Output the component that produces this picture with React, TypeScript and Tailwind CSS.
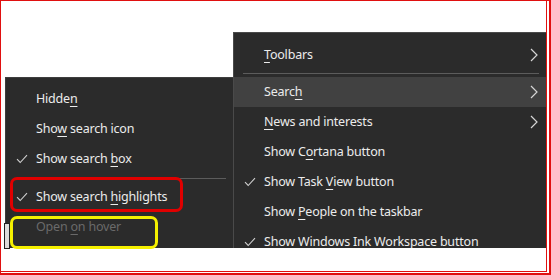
import React from 'react';

type Item = {
  label: React.ReactNode;
  checked?: boolean;
  submenu?: boolean;
  active?: boolean;
  disabled?: boolean;
};

const font = { fontFamily: '"Noto Sans", "Open Sans", sans-serif' };

const Check: React.FC = () => (
  <svg width="12" height="10" viewBox="0 0 12 10" fill="none" className="text-[#d0d0d0]">
    <path d="M1 5.2 L4.2 8.5 L11 1.2" stroke="currentColor" strokeWidth="1.1" />
  </svg>
);

const Chevron: React.FC = () => (
  <svg width="8" height="14" viewBox="0 0 8 14" fill="none" className="text-[#d6d6d6]">
    <path d="M1 1 L7 7 L1 13" stroke="currentColor" strokeWidth="1.2" />
  </svg>
);

const Key: React.FC<{ children: React.ReactNode }> = ({ children }) => (
  <span className="underline underline-offset-[3px] decoration-1">{children}</span>
);

const MenuRow: React.FC<{ item: Item }> = ({ item }) => (
  <div
    className={
      'flex h-[30px] shrink-0 items-center ' +
      (item.active ? 'bg-[#414141]' : '')
    }
  >
    <div className="flex w-[30px] shrink-0 justify-center pl-[2px]">
      {item.checked && <Check />}
    </div>
    <div
      className={
        'flex-1 whitespace-nowrap text-[12.5px] tracking-[-0.2px] ' +
        (item.disabled ? 'text-[#6a6a6a]' : 'text-[#ececec]')
      }
    >
      {item.label}
    </div>
    {item.submenu && (
      <div className="pr-[8px]">
        <Chevron />
      </div>
    )}
  </div>
);

const Separator: React.FC<{ className: string }> = ({ className }) => (
  <div className={'flex shrink-0 items-center ' + className}>
    <div className="h-px w-full bg-[#5c5c5c]" />
  </div>
);

const searchItems: Item[] = [
  { label: <>Hidde<Key>n</Key></> },
  { label: <>Sho<Key>w</Key> search icon</> },
  { label: <>Show search <Key>b</Key>ox</>, checked: true },
];

const taskbarItems: Item[] = [
  { label: <>Show C<Key>o</Key>rtana button</> },
  { label: <>Show Task <Key>V</Key>iew button</>, checked: true },
  { label: <>Show <Key>P</Key>eople on the taskbar</> },
  { label: <>Show Windows Ink <Key>W</Key>orkspace button</>, checked: true },
];

export default function App() {
  return (
    <div
      className="relative h-[275px] w-[551px] overflow-hidden border-b-2 border-l border-r-2 border-t border-[#e01010] bg-white"
      style={font}
    >
      <div className="h-[271px] w-[546px] border-b border-r border-[#e01010]">
        <div className="flex items-end pl-[4px] pt-[31px]">
          {/* search submenu */}
          <div className="flex h-[171px] w-[229px] shrink-0 flex-col border-l border-t border-[#3e3e3e] bg-[#2b2b2b] pt-[6px]">
            {searchItems.map((it, i) => (
              <MenuRow key={i} item={it} />
            ))}
            <Separator className="h-[8px] pl-[10px] pr-[8px]" />
            <MenuRow item={{ label: <>Show search <Key>h</Key>ighlights</>, checked: true }} />
            <MenuRow item={{ label: <>Open <Key>o</Key>n hover</>, disabled: true }} />
          </div>

          {/* taskbar menu */}
          <div className="-ml-px flex h-[216px] w-[313px] shrink-0 flex-col overflow-hidden border-l border-t border-[#4a4a4a] bg-[#2b2b2b] pt-[7px]">
            <MenuRow item={{ label: <><Key>T</Key>oolbars</>, submenu: true }} />
            <Separator className="h-[7px] pl-[9px] pr-[7px]" />
            <MenuRow item={{ label: <>Searc<Key>h</Key></>, submenu: true, active: true }} />
            <MenuRow item={{ label: <><Key>N</Key>ews and interests</>, submenu: true }} />
            {taskbarItems.map((it, i) => (
              <MenuRow key={i} item={it} />
            ))}
          </div>
        </div>
      </div>

      {/* annotation boxes */}
      <div className="absolute left-[9px] top-[176px] h-[35px] w-[173px] rounded-[7px] border-[3px] border-[#e00000]" />
      <div className="absolute left-[9px] top-[215px] h-[33px] w-[148px] rounded-[7px] border-[3px] border-[#f5f000]" />
      <div className="absolute left-[3px] top-[222px] h-[26px] w-[6px] border border-[#222] bg-[#dcdcdc]" />
    </div>
  );
}
